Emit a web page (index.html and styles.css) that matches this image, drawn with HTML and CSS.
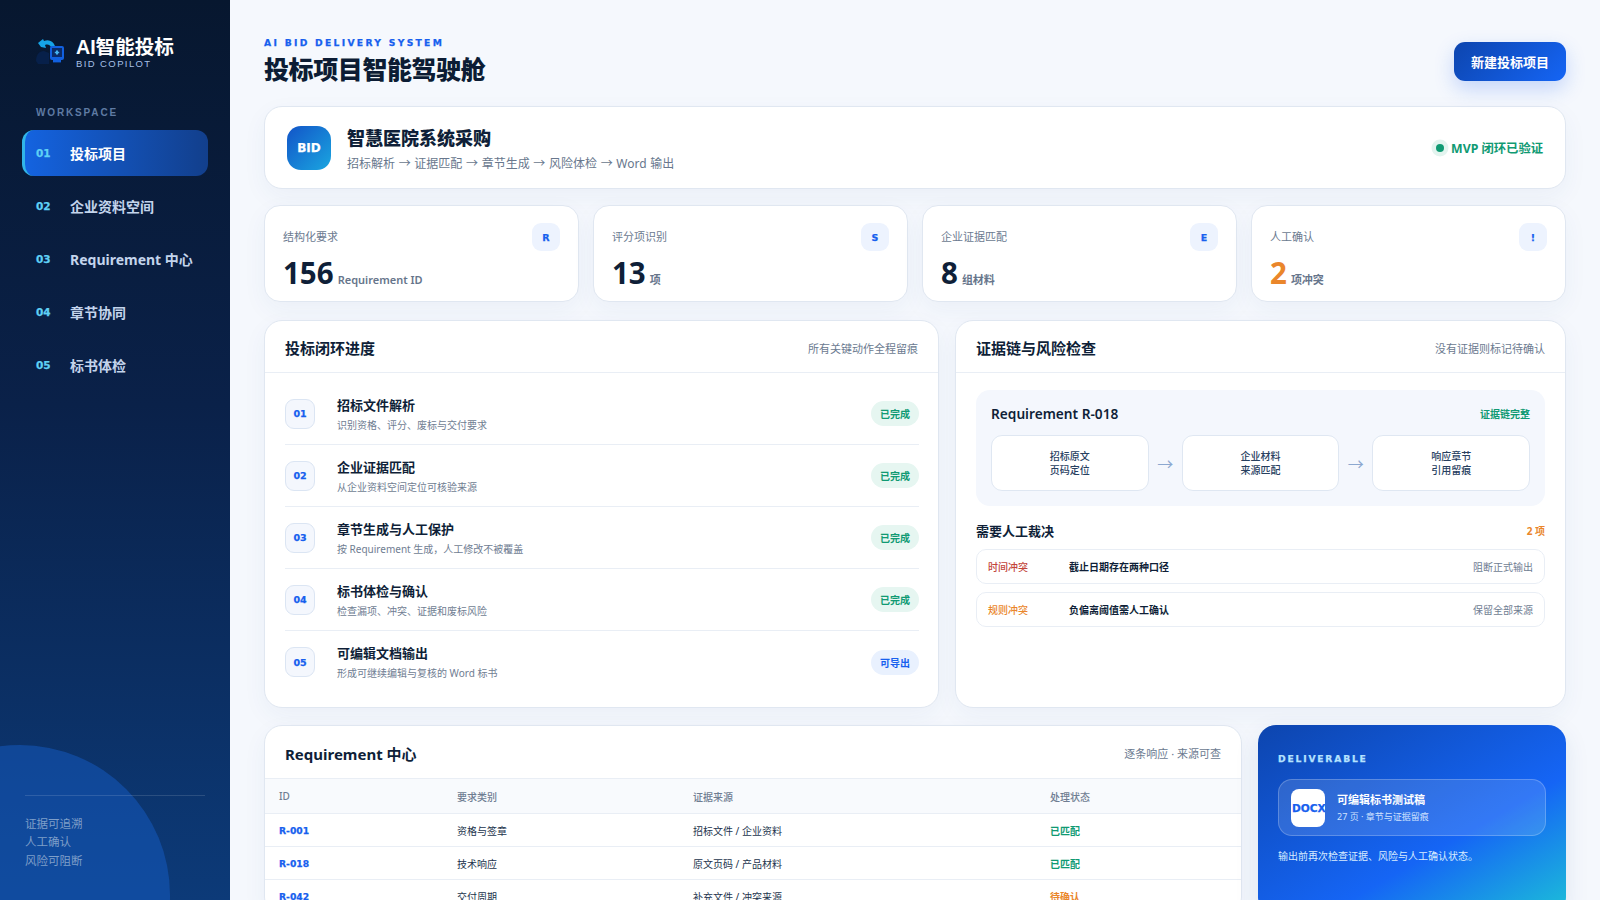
FILE: index.html
```html
<!DOCTYPE html>
<html lang="zh-CN">
<head>
<meta charset="utf-8">
<title>AI智能投标</title>
<link rel="stylesheet" href="styles.css">
</head>
<body>
<div class="app">
  <aside class="sidebar">
    <div class="glow"></div>
    <div class="brand">
      <svg class="logo" viewBox="0 0 30 30" width="30" height="30">
        <path d="M1 25c0-6 3-10 8-10l5 2v11H3z" fill="#07204a"/>
        <path d="M3 7l5-4 1 2c5-2 9 0 11 5l-4 1c-1-2-3-3-6-2l1 3-5-1z" fill="#16a3e6"/>
        <rect x="15" y="10" width="14" height="14" rx="2" fill="#1160e0"/>
        <rect x="17" y="12" width="10" height="9" fill="#0b2a66"/>
        <path d="M21 14.5h2v1.2h1.2v1.6H23v1.2h-2v-1.2h-1.2v-1.6H21z" fill="#46b4f0"/>
        <rect x="18" y="24" width="8" height="2.4" fill="#1160e0"/>
      </svg>
      <div>
        <div class="brand-name">AI智能投标</div>
        <div class="brand-sub">BID COPILOT</div>
      </div>
    </div>
    <div class="nav-label">WORKSPACE</div>
    <nav class="nav">
      <a class="nav-item active"><b>01</b><span>投标项目</span></a>
      <a class="nav-item"><b>02</b><span>企业资料空间</span></a>
      <a class="nav-item"><b>03</b><span>Requirement 中心</span></a>
      <a class="nav-item"><b>04</b><span>章节协同</span></a>
      <a class="nav-item"><b>05</b><span>标书体检</span></a>
    </nav>
    <div class="side-foot">证据可追溯<br>人工确认<br>风险可阻断</div>
  </aside>

  <main class="main">
    <header class="top">
      <div>
        <div class="eyebrow">AI BID DELIVERY SYSTEM</div>
        <h1>投标项目智能驾驶舱</h1>
      </div>
      <button class="primary">新建投标项目</button>
    </header>

    <section class="hero">
      <div class="bid">BID</div>
      <div class="hero-text">
        <h2>智慧医院系统采购</h2>
        <p>招标解析 → 证据匹配 → 章节生成 → 风险体检 → Word 输出</p>
      </div>
      <div class="verified"><i></i>MVP 闭环已验证</div>
    </section>

    <section class="kpis">
      <div class="kpi"><div class="kpi-head"><span>结构化要求</span><em>R</em></div><div class="kpi-val"><strong>156</strong><small>Requirement ID</small></div></div>
      <div class="kpi"><div class="kpi-head"><span>评分项识别</span><em>S</em></div><div class="kpi-val"><strong>13</strong><small>项</small></div></div>
      <div class="kpi"><div class="kpi-head"><span>企业证据匹配</span><em>E</em></div><div class="kpi-val"><strong>8</strong><small>组材料</small></div></div>
      <div class="kpi"><div class="kpi-head"><span>人工确认</span><em>!</em></div><div class="kpi-val"><strong class="warn">2</strong><small>项冲突</small></div></div>
    </section>

    <section class="panels">
      <div class="panel">
        <div class="panel-head"><h3>投标闭环进度</h3><span>所有关键动作全程留痕</span></div>
        <div class="steps">
          <div class="step"><div class="num">01</div><div class="step-text"><h4>招标文件解析</h4><p>识别资格、评分、废标与交付要求</p></div><div class="pill">已完成</div></div>
          <div class="step"><div class="num">02</div><div class="step-text"><h4>企业证据匹配</h4><p>从企业资料空间定位可核验来源</p></div><div class="pill">已完成</div></div>
          <div class="step"><div class="num">03</div><div class="step-text"><h4>章节生成与人工保护</h4><p>按 Requirement 生成，人工修改不被覆盖</p></div><div class="pill">已完成</div></div>
          <div class="step"><div class="num">04</div><div class="step-text"><h4>标书体检与确认</h4><p>检查漏项、冲突、证据和废标风险</p></div><div class="pill">已完成</div></div>
          <div class="step"><div class="num">05</div><div class="step-text"><h4>可编辑文档输出</h4><p>形成可继续编辑与复核的 Word 标书</p></div><div class="pill blue">可导出</div></div>
        </div>
      </div>
      <div class="panel">
        <div class="panel-head"><h3>证据链与风险检查</h3><span>没有证据则标记待确认</span></div>
        <div class="evidence">
          <div class="chain">
            <div class="chain-head"><strong>Requirement R-018</strong><span>证据链完整</span></div>
            <div class="chain-flow">
              <div class="node">招标原文<br>页码定位</div><div class="arrow">→</div>
              <div class="node">企业材料<br>来源匹配</div><div class="arrow">→</div>
              <div class="node">响应章节<br>引用留痕</div>
            </div>
          </div>
          <div class="manual-head"><strong>需要人工裁决</strong><span>2 项</span></div>
          <div class="conflict"><span class="c-tag red">时间冲突</span><span class="c-text">截止日期存在两种口径</span><span class="c-act">阻断正式输出</span></div>
          <div class="conflict"><span class="c-tag orange">规则冲突</span><span class="c-text">负偏离阈值需人工确认</span><span class="c-act">保留全部来源</span></div>
        </div>
      </div>
    </section>

    <section class="bottom">
      <div class="panel">
        <div class="panel-head tall"><h3>Requirement 中心</h3><span>逐条响应 · 来源可查</span></div>
        <div class="table">
          <div class="tr th"><span>ID</span><span>要求类别</span><span>证据来源</span><span>处理状态</span></div>
          <div class="tr"><b>R-001</b><span>资格与签章</span><span>招标文件 / 企业资料</span><span class="ok">已匹配</span></div>
          <div class="tr"><b>R-018</b><span>技术响应</span><span>原文页码 / 产品材料</span><span class="ok">已匹配</span></div>
          <div class="tr"><b>R-042</b><span>交付周期</span><span>补充文件 / 冲突来源</span><span class="pending">待确认</span></div>
        </div>
      </div>
      <div class="deliver">
        <div class="d-label">DELIVERABLE</div>
        <div class="d-box">
          <div class="docx">DOCX</div>
          <div>
            <div class="d-title">可编辑标书测试稿</div>
            <div class="d-sub">27 页 · 章节与证据留痕</div>
          </div>
        </div>
        <p class="d-note">输出前再次检查证据、风险与人工确认状态。</p>
      </div>
    </section>
  </main>
</div>
</body>
</html>
```
FILE: styles.css
```css
* { box-sizing: border-box; margin: 0; padding: 0; }
html, body { height: 100%; overflow: hidden; }
body {
  font-family: "Noto Sans", "Noto Sans CJK SC", sans-serif;
  background: #f5f8fd;
  color: #0f1f38;
}
.app { display: flex; height: 900px; overflow: hidden; }

.sidebar {
  position: relative;
  flex: 0 0 230px;
  display: flex;
  flex-direction: column;
  padding: 33px 22px 30px;
  background: linear-gradient(180deg, #07172f 0%, #0a2149 45%, #0c3a78 100%);
  overflow: hidden;
}
.glow {
  position: absolute;
  left: -130px;
  top: 745px;
  width: 300px;
  height: 300px;
  border-radius: 50%;
  background: rgba(25, 100, 215, .42);
}
.brand { display: flex; align-items: center; gap: 11px; padding-left: 13px; height: 32px; margin-top: 4px; position: relative; }
.logo { flex: none; margin-top: -4px; }
.brand-name { font: 700 19.6px/22px "Liberation Sans", "Noto Sans CJK SC", sans-serif; color: #fff; }
.brand-sub { font: 400 9.5px/12px "Liberation Sans", sans-serif; letter-spacing: 1.4px; color: #a6c0e6; }
.nav-label { font: 700 10px/12px "Liberation Sans", sans-serif; letter-spacing: 1.85px; color: #5f7ba3; margin: 38px 0 11px 14px; position: relative; }
.nav { display: flex; flex-direction: column; gap: 7px; position: relative; }
.nav-item {
  display: flex;
  align-items: center;
  height: 46px;
  padding-left: 14px;
  border-radius: 12px;
  color: #c3d4ec;
  font-size: 14px;
  font-weight: 700;
}
.nav-item b { width: 34px; padding-top: 1px; font: 700 10.5px/1 "DejaVu Sans", sans-serif; color: #5fd0f5; -webkit-text-stroke: .25px #5fd0f5; }
.nav-item.active {
  padding-left: 11px;
  border-left: 3px solid #31b5e8;
  background: linear-gradient(90deg, #1463e0, #123f8c);
  color: #fff;
}
.side-foot {
  position: relative;
  margin: auto 3px 0;
  border-top: 1px solid rgba(255, 255, 255, .13);
  padding-top: 19px;
  font-size: 11.5px;
  line-height: 18.4px;
  color: #7f9fc9;
}

.main { flex: 1; min-width: 0; padding: 36px 34px 0; overflow: hidden; }
.top { display: flex; justify-content: space-between; align-items: flex-start; height: 70px; }
.eyebrow { font: 700 9.2px/14px "DejaVu Sans", sans-serif; letter-spacing: 2.3px; color: #1760ee; -webkit-text-stroke: .25px #1760ee; }
h1 { font-size: 25px; line-height: 36px; font-weight: 800; letter-spacing: -.4px; color: #0c1c34; margin-top: 1px; }
.primary {
  width: 112px;
  height: 39px;
  margin-top: 6px;
  border: 0;
  border-radius: 11px;
  background: linear-gradient(135deg, #0d45ae, #1565f5);
  box-shadow: 0 8px 20px rgba(21, 90, 235, .22);
  color: #fff;
  font: 700 13px "Noto Sans", "Noto Sans CJK SC", sans-serif;
}

.hero, .kpi, .panel {
  background: #fff;
  border: 1px solid #e0e7f1;
  box-shadow: 0 8px 24px rgba(30, 70, 130, .05);
}
.hero {
  display: flex;
  align-items: center;
  height: 83px;
  padding: 0 22px;
  border-radius: 18px;
}
.bid {
  width: 44px;
  height: 44px;
  flex: none;
  border-radius: 14px;
  background: linear-gradient(135deg, #1254c8, #1aa6e0);
  color: #fff;
  display: flex;
  align-items: center;
  justify-content: center;
  font: 700 12px "DejaVu Sans", sans-serif;
  -webkit-text-stroke: .25px #fff;
}
.hero-text { margin-left: 16px; flex: 1; padding-top: 4px; }
.hero-text h2 { font-size: 18px; line-height: 24px; font-weight: 800; color: #0f1f38; }
.hero-text p { font-size: 12px; line-height: 18px; color: #68778d; margin-top: 5px; word-spacing: .55px; }
.verified { display: flex; align-items: center; gap: 3px; color: #109a73; font-size: 12.3px; font-weight: 700; }
.verified i {
  width: 8px;
  height: 8px;
  margin: 0 4px 0 5px;
  border-radius: 50%;
  background: #109a73;
  box-shadow: 0 0 0 4.5px #e3f4ef;
}

.kpis { display: grid; grid-template-columns: repeat(4, 1fr); gap: 14px; margin-top: 16px; }
.kpi { height: 97px; border-radius: 16px; padding: 17px 18px 0; }
.kpi-head { display: flex; justify-content: space-between; align-items: flex-start; }
.kpi-head span { font-size: 11px; line-height: 28px; color: #6b7a90; }
.kpi-head em {
  width: 28px;
  height: 28px;
  border-radius: 9px;
  background: #edf3fe;
  color: #1760ee;
  display: flex;
  align-items: center;
  justify-content: center;
  font: 700 9.5px "DejaVu Sans", sans-serif;
  -webkit-text-stroke: .25px #1760ee;
}
.kpi-val { display: flex; align-items: baseline; gap: 4px; margin-top: 4px; }
.kpi-val strong { font-size: 29.5px; line-height: 36px; font-weight: 700; color: #0f1f38; }
.kpi-val strong.warn { color: #ea862b; }
.kpi-val small { font-size: 11px; font-weight: 600; color: #66758b; }

.panels { display: grid; grid-template-columns: 675px 1fr; gap: 16px; margin-top: 18px; height: 388px; }
.panel { border-radius: 18px; overflow: hidden; }
.panel-head {
  display: flex;
  justify-content: space-between;
  align-items: center;
  height: 52px;
  padding: 2px 20px 0;
  border-bottom: 1px solid #e9eef5;
}
.panel-head.tall { height: 53px; }
.panel-head h3 { font-size: 15px; font-weight: 700; color: #0f1f38; }
.panel-head span { font-size: 11px; color: #6b7a90; }

.steps { padding: 10px 19px 0 20px; }
.step { display: flex; align-items: center; height: 62px; border-bottom: 1px solid #e9eef5; }
.step:last-child { border-bottom: 0; }
.num {
  width: 30px;
  height: 30px;
  flex: none;
  border: 1px solid #dbe5f3;
  border-radius: 9px;
  background: #f4f7fd;
  color: #1760ee;
  display: flex;
  align-items: center;
  justify-content: center;
  font: 700 9.5px "DejaVu Sans", sans-serif;
  -webkit-text-stroke: .25px #1760ee;
}
.step-text { margin-left: 22px; flex: 1; }
.step-text h4 { font-size: 13px; line-height: 18px; font-weight: 700; color: #0f1f38; }
.step-text p { font-size: 10px; line-height: 14px; color: #6f7d92; margin-top: 4px; }
.pill {
  width: 48px;
  height: 25px;
  border-radius: 13px;
  background: #e6f6f1;
  color: #109a73;
  font-size: 10px;
  font-weight: 700;
  display: flex;
  align-items: center;
  justify-content: center;
}
.pill.blue { background: #e9f1fe; color: #1760ee; }

.evidence { padding: 17px 20px 0; }
.chain { height: 116px; border-radius: 14px; background: #f4f7fd; padding: 13px 15px 0 15px; }
.chain-head { display: flex; justify-content: space-between; align-items: center; height: 20px; }
.chain-head strong { font-size: 13.7px; font-weight: 600; color: #0f1f38; }
.chain-head span { font-size: 10px; font-weight: 700; color: #109a73; }
.chain-flow { display: flex; align-items: center; margin-top: 12px; }
.node {
  flex: 1;
  height: 56px;
  border: 1px solid #dfe7f2;
  border-radius: 11px;
  background: #fff;
  color: #27405f;
  font-size: 10px;
  font-weight: 500;
  line-height: 14.5px;
  display: flex;
  align-items: center;
  justify-content: center;
  text-align: center;
}
.arrow { width: 33px; flex: none; text-align: center; color: #8ca8d0; font-size: 16px; }
.manual-head { display: flex; justify-content: space-between; align-items: center; height: 20px; margin-top: 14px; }
.manual-head strong { font-size: 13px; font-weight: 600; color: #0f1f38; }
.manual-head span { font-size: 10px; font-weight: 700; color: #ea862b; }
.conflict {
  display: flex;
  align-items: center;
  height: 35px;
  margin-top: 8px;
  padding: 0 11px;
  border: 1px solid #e9eef5;
  border-radius: 10px;
  font-size: 10px;
}
.manual-head + .conflict { margin-top: 9px; }
.c-tag { width: 81px; font-weight: 500; }
.c-tag.red { color: #c2453b; }
.c-tag.orange { color: #ea862b; }
.c-text { flex: 1; font-weight: 600; color: #0f1f38; }
.c-act { color: #6f7d92; }

.bottom { display: grid; grid-template-columns: 978px 1fr; gap: 16px; margin-top: 17px; height: 190px; }
.table { font-size: 10px; }
.tr {
  display: grid;
  grid-template-columns: 178px 236px 357px 1fr;
  align-items: center;
  height: 33px;
  padding: 0 14px;
  border-bottom: 1px solid #e9eef5;
  color: #23344d;
}
.tr.th { height: 35px; background: #f8fafd; color: #6f7d92; font-weight: 500; }
.tr b { font: 700 9.2px "DejaVu Sans", sans-serif; color: #1760ee; -webkit-text-stroke: .25px #1760ee; }
.ok { color: #109a73; font-weight: 700; }
.pending { color: #ea862b; font-weight: 700; }

.deliver {
  height: 190px;
  border-radius: 18px;
  padding: 27px 20px 0;
  background: linear-gradient(150deg, #0d45ae 0%, #1565f5 62%, #1cc0d8 100%);
  box-shadow: 0 8px 24px rgba(30, 70, 130, .1);
  color: #fff;
}
.d-label { font: 700 9.2px/14px "DejaVu Sans", sans-serif; letter-spacing: 1.8px; color: #b5e2ff; -webkit-text-stroke: .25px #b5e2ff; }
.d-box {
  display: flex;
  align-items: center;
  gap: 12px;
  height: 57px;
  margin-top: 13px;
  padding: 0 12px;
  border: 1px solid rgba(255, 255, 255, .22);
  border-radius: 14px;
  background: rgba(255, 255, 255, .13);
}
.docx {
  width: 34px;
  height: 38px;
  flex: none;
  padding-left: 1px;
  border-radius: 8px;
  background: #fff;
  color: #1760ee;
  display: flex;
  align-items: center;
  font: 700 10.6px "DejaVu Sans", sans-serif;
  -webkit-text-stroke: .25px #1760ee;
  white-space: nowrap;
  overflow: hidden;
}
.d-title { font-size: 11px; line-height: 16px; font-weight: 700; }
.d-sub { font-size: 9px; line-height: 14px; color: #cfe2ff; margin-top: 2px; }
.d-note { font-size: 10px; line-height: 16px; color: #d8ecff; margin-top: 12px; }
```
